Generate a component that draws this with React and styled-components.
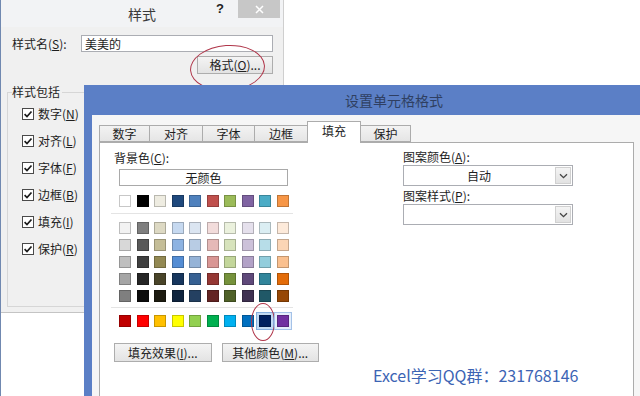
import React from 'react';
import styled, { createGlobalStyle } from 'styled-components';

const GlobalStyle = createGlobalStyle`
	html, body {
		margin: 0;
		padding: 0;
		background: #fff;
	}
	body {
		font-family: "Noto Sans CJK SC", "Noto Sans", sans-serif;
		font-size: 12px;
		color: #1e1e1e;
	}
`;

const Screen = styled.div`
	position: relative;
	width: 640px;
	height: 396px;
	overflow: hidden;
	background: #fff;
	border-left: 1px solid #7088b0;
	box-sizing: border-box;
`;

/* ---- back dialog: 样式 ---- */

const StyleDialog = styled.div`
	width: 283px;
	height: 313px;
	box-sizing: border-box;
	background: #f0f0f0;
	border-right: 1px solid #cfcfcf;
	border-bottom: 1px solid #c4c4c4;
	display: flex;
	flex-direction: column;
`;

const TitleBar = styled.div`
	height: 27px;
	display: grid;
	grid-template-columns: 1fr auto 1fr;
	align-items: start;
	background: #f2f3f5;
`;

const TitleText = styled.div`
	grid-column: 2;
	font-size: 14px;
	line-height: 28px;
	color: #3a3a3a;
`;

const TitleControls = styled.div`
	display: flex;
	justify-content: flex-end;
	align-items: flex-start;
	padding-right: 3px;
`;

const Help = styled.span`
	font-family: "Liberation Sans", sans-serif;
	font-weight: bold;
	font-size: 13px;
	line-height: 18px;
	margin-right: 14px;
	color: #222;
`;

const CloseButton = styled.div`
	width: 42px;
	height: 18px;
	background: #c7c7c7;
	display: flex;
	align-items: center;
	justify-content: center;
`;

const DialogBody = styled.div`
	padding: 8px 10px 0 11px;
	display: flex;
	flex-direction: column;
`;

const NameRow = styled.div`
	display: flex;
	align-items: center;
	height: 17px;
`;

const NameLabel = styled.span`
	width: 69px;
	line-height: 16px;
`;

const TextInput = styled.div`
	flex: 1;
	height: 17px;
	box-sizing: border-box;
	border: 1px solid #abadb3;
	background: #fff;
	padding-left: 3px;
	line-height: 15px;
`;

const ButtonRow = styled.div`
	display: flex;
	justify-content: flex-end;
	margin-top: 4px;
`;

const Marked = styled.div`
	position: relative;
`;

const PushButton = styled.div`
	width: ${p => p.$w}px;
	height: ${p => p.$h}px;
	box-sizing: border-box;
	border: 1px solid #adadad;
	background: linear-gradient(#f4f4f4, #e3e3e3);
	display: flex;
	align-items: center;
	justify-content: center;
	line-height: 14px;
	color: #222;
	white-space: nowrap;
`;

const RedRing = styled.div`
	position: absolute;
	left: ${p => p.$x}px;
	top: ${p => p.$y}px;
	width: ${p => p.$w}px;
	height: ${p => p.$h}px;
	border: 1px solid #b0364a;
	border-radius: 50%;
	transform: rotate(${p => p.$r || 0}deg);
	pointer-events: none;
`;

const GroupBox = styled.fieldset`
	margin: 10px -40px 0 -5px;
	padding: 0 0 44px 4px;
	border: 1px solid #d6d6d6;
	min-width: 0;
`;

const GroupTitle = styled.legend`
	padding: 0 2px 0 0;
	line-height: 16px;
	font-size: 12px;
`;

const CheckRow = styled.div`
	height: 27px;
	margin-left: 10px;
	display: flex;
	align-items: center;
	gap: 4px;
	line-height: 16px;
`;

const CheckBox = styled.div`
	width: 12px;
	height: 12px;
	box-sizing: border-box;
	border: 1px solid #4a4a4a;
	background: #fff;
	display: flex;
	align-items: center;
	justify-content: center;
`;

const Key = styled.span`
	text-decoration: underline;
	text-underline-offset: 1px;
`;

/* ---- front dialog: 设置单元格格式 ---- */

const FormatDialog = styled.div`
	position: absolute;
	left: 83px;
	top: 85px;
	width: 620px;
	height: 330px;
	background: #5b7fc6;
	display: flex;
	flex-direction: column;
`;

const FormatTitle = styled.div`
	height: 30px;
	text-align: center;
	font-size: 14px;
	line-height: 31px;
	color: #2f3f62;
`;

const FormatBody = styled.div`
	flex: 1;
	margin-left: 8px;
	background: #f6f6f6;
	padding: 7px 0 0 7px;
	display: flex;
	flex-direction: column;
`;

const Tabs = styled.div`
	display: flex;
	align-items: flex-end;
	height: 20px;
	position: relative;
	z-index: 1;
`;

const Tab = styled.div`
	width: ${p => p.$w}px;
	height: ${p => (p.$active ? 22 : 17)}px;
	margin-right: -1px;
	margin-bottom: ${p => (p.$active ? -1 : 0)}px;
	box-sizing: border-box;
	border: 1px solid #acacac;
	border-bottom: ${p => (p.$active ? 'none' : '1px solid #acacac')};
	background: ${p => (p.$active ? '#fff' : 'linear-gradient(#f3f3f3, #e5e5e5)')};
	text-align: center;
	line-height: ${p => (p.$active ? 18 : 15)}px;
	position: relative;
	z-index: ${p => (p.$active ? 2 : 1)};
`;

const Panel = styled.div`
	width: 535px;
	flex: 1;
	box-sizing: border-box;
	background: #fff;
	border: 1px solid #acacac;
	padding: 7px 0 0 14px;
	display: flex;
`;

const LeftColumn = styled.div`
	width: 205px;
	display: flex;
	flex-direction: column;
`;

const RightColumn = styled.div`
	width: 170px;
	margin-left: 84px;
	margin-top: -1px;
	display: flex;
	flex-direction: column;
`;

const FieldLabel = styled.div`
	line-height: 16px;
	margin-top: ${p => p.$mt || 0}px;
`;

const NoColor = styled.div`
	margin: 3px 0 0 5px;
	width: 169px;
	height: 17px;
	box-sizing: border-box;
	border: 1px solid #a9a9a9;
	text-align: center;
	line-height: 15px;
`;

const SwatchRow = styled.div`
	display: flex;
	gap: 5.55px;
	margin-left: 5px;
	margin-top: ${p => p.$mt || 0}px;
`;

const SwatchGrid = styled.div`
	display: flex;
	flex-direction: column;
	gap: 5px;
	margin-top: 8px;
`;

const Swatch = styled.div`
	position: relative;
	width: 12px;
	height: 12px;
	box-sizing: border-box;
	border: 1px solid rgba(0, 0, 0, 0.22);
	background: ${p => p.$c};
	box-shadow: ${p =>
		p.$selected
			? '0 0 0 2px #c3daf3, 0 0 0 3px #86afe0'
			: p.$hover
			? '0 0 0 2px #e4eefb, 0 0 0 3px #a4c2e8'
			: 'none'};
`;

const Separator = styled.div`
	height: 1px;
	width: 182px;
	margin: ${p => p.$mt}px 0 0 -3px;
	background: #e4e4e4;
`;

const ActionRow = styled.div`
	display: flex;
	gap: 10px;
	margin-top: 16px;
`;

const Combo = styled.div`
	height: 21px;
	box-sizing: border-box;
	border: 1px solid #abadb3;
	background: #fff;
	display: flex;
`;

const ComboValue = styled.div`
	flex: 1;
	text-align: center;
	line-height: 19px;
`;

const ComboArrow = styled.div`
	width: 16px;
	margin: 1px;
	box-sizing: border-box;
	border: 1px solid #d0d0d0;
	background: linear-gradient(#f4f4f4, #e2e2e2);
	display: flex;
	align-items: center;
	justify-content: center;
`;

const Watermark = styled.div`
	position: absolute;
	left: 372px;
	top: 365px;
	font-size: 16px;
	line-height: 20px;
	color: #3c64b4;
	white-space: nowrap;
`;

const themeRow = ['#FFFFFF', '#000000', '#EEECE1', '#1F497D', '#4F81BD', '#C0504D', '#9BBB59', '#8064A2', '#4BACC6', '#F79646'];

const shadeRows = [
	['#F2F2F2', '#7F7F7F', '#DDD9C3', '#C6D9F0', '#DBE5F1', '#F2DCDB', '#EBF1DD', '#E5E0EC', '#DBEEF3', '#FDEADA'],
	['#D8D8D8', '#595959', '#C4BD97', '#8DB3E2', '#B8CCE4', '#E5B9B7', '#D7E3BC', '#CCC1D9', '#B7DDE8', '#FBD5B5'],
	['#BFBFBF', '#3F3F3F', '#938953', '#548DD4', '#95B3D7', '#D99694', '#C3D69B', '#B2A2C7', '#92CDDC', '#FAC08F'],
	['#A5A5A5', '#262626', '#494429', '#17365D', '#366092', '#953734', '#76923C', '#5F497A', '#31859B', '#E36C09'],
	['#7F7F7F', '#0C0C0C', '#1D1B10', '#0F243E', '#244061', '#632423', '#4F6128', '#3F3151', '#205867', '#974806'],
];

const standardRow = ['#C00000', '#FF0000', '#FFC000', '#FFFF00', '#92D050', '#00B050', '#00B0F0', '#0070C0', '#002060', '#7030A0'];

const checks = [
	['数字', 'N'],
	['对齐', 'L'],
	['字体', 'F'],
	['边框', 'B'],
	['填充', 'I'],
	['保护', 'R'],
];

const tabs = [
	['数字', 51],
	['对齐', 54],
	['字体', 53],
	['边框', 54],
	['填充', 54],
	['保护', 51],
];

const CheckMark = () => (
	<svg width="10" height="10" viewBox="0 0 10 10">
		<path d="M1.6 5.1 L4 7.5 L8.5 2.5" fill="none" stroke="#1a1a1a" strokeWidth="1.7" />
	</svg>
);

const CloseIcon = () => (
	<svg width="9" height="9" viewBox="0 0 9 9">
		<path d="M1 1 L8 8 M8 1 L1 8" stroke="#fff" strokeWidth="1.5" />
	</svg>
);

const Chevron = () => (
	<svg width="9" height="6" viewBox="0 0 9 6">
		<path d="M1 1.2 L4.5 4.7 L8 1.2" fill="none" stroke="#444" strokeWidth="1.3" />
	</svg>
);

const Dropdown = ({ value }) => (
	<Combo>
		<ComboValue>{value}</ComboValue>
		<ComboArrow>
			<Chevron />
		</ComboArrow>
	</Combo>
);

export default function App() {
	return (
		<Screen>
			<GlobalStyle />
			<StyleDialog>
				<TitleBar>
					<TitleText>样式</TitleText>
					<TitleControls>
						<Help>?</Help>
						<CloseButton>
							<CloseIcon />
						</CloseButton>
					</TitleControls>
				</TitleBar>
				<DialogBody>
					<NameRow>
						<NameLabel>样式名(<Key>S</Key>):</NameLabel>
						<TextInput>美美的</TextInput>
					</NameRow>
					<ButtonRow>
						<Marked>
							<PushButton $w={76} $h={18}>格式(<Key>O</Key>)...</PushButton>
							<RedRing $x={-7} $y={-11} $w={73} $h={44} $r={-4} />
						</Marked>
					</ButtonRow>
					<GroupBox>
						<GroupTitle>样式包括</GroupTitle>
						{checks.map(([label, key]) => (
							<CheckRow key={key}>
								<CheckBox>
									<CheckMark />
								</CheckBox>
								<span>{label}(<Key>{key}</Key>)</span>
							</CheckRow>
						))}
					</GroupBox>
				</DialogBody>
			</StyleDialog>

			<FormatDialog>
				<FormatTitle>设置单元格格式</FormatTitle>
				<FormatBody>
					<Tabs>
						{tabs.map(([label, w]) => (
							<Tab key={label} $w={w} $active={label === '填充'}>{label}</Tab>
						))}
					</Tabs>
					<Panel>
						<LeftColumn>
							<FieldLabel>背景色(<Key>C</Key>):</FieldLabel>
							<NoColor>无颜色</NoColor>
							<SwatchRow $mt={9}>
								{themeRow.map((c, i) => <Swatch key={i} $c={c} />)}
							</SwatchRow>
							<Separator $mt={6} />
							<SwatchGrid>
								{shadeRows.map((row, r) => (
									<SwatchRow key={r}>
										{row.map((c, i) => <Swatch key={i} $c={c} />)}
									</SwatchRow>
								))}
							</SwatchGrid>
							<Separator $mt={5} />
							<SwatchRow $mt={7}>
								{standardRow.map((c, i) => (
									<Swatch key={i} $c={c} $selected={i === 8} $hover={i === 9}>
										{i === 8 && <RedRing $x={-9} $y={-13} $w={22} $h={36} />}
									</Swatch>
								))}
							</SwatchRow>
							<ActionRow>
								<PushButton $w={98} $h={19}>填充效果(<Key>I</Key>)...</PushButton>
								<PushButton $w={98} $h={19}>其他颜色(<Key>M</Key>)...</PushButton>
							</ActionRow>
						</LeftColumn>
						<RightColumn>
							<FieldLabel>图案颜色(<Key>A</Key>):</FieldLabel>
							<Dropdown value="自动" />
							<FieldLabel $mt={2}>图案样式(<Key>P</Key>):</FieldLabel>
							<Dropdown value="" />
						</RightColumn>
					</Panel>
				</FormatBody>
			</FormatDialog>

			<Watermark>Excel学习QQ群：231768146</Watermark>
		</Screen>
	);
}
